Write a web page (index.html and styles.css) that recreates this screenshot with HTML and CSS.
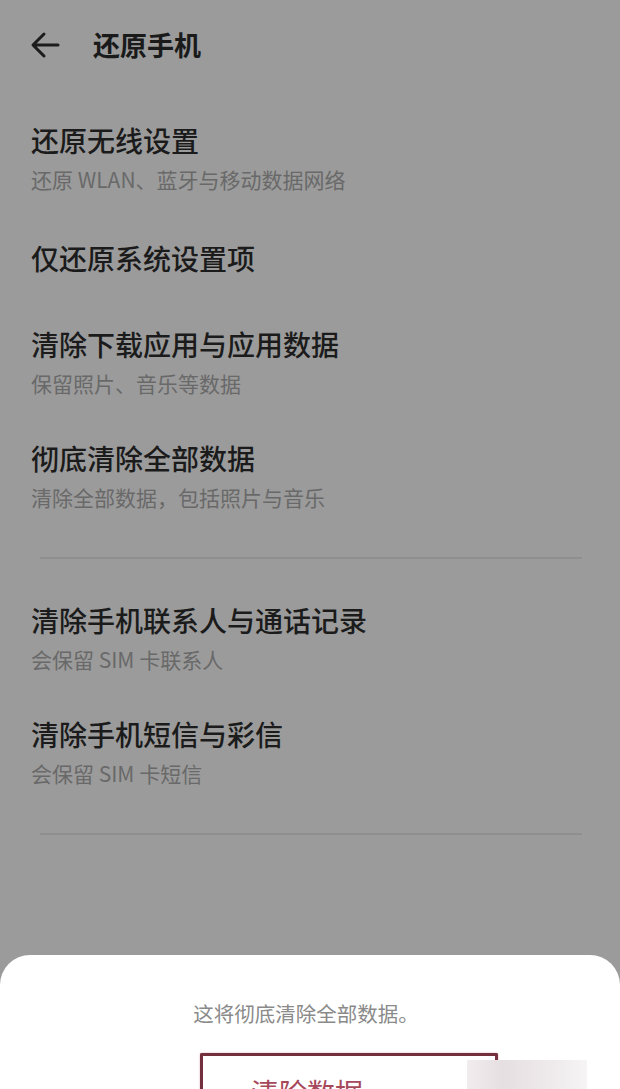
FILE: index.html
```html
<!DOCTYPE html>
<html lang="zh-CN">
<head>
<meta charset="utf-8">
<title>还原手机</title>
<link rel="stylesheet" href="styles.css">
</head>
<body>
<div class="screen">
  <header class="topbar">
    <svg class="back" width="30" height="28" viewBox="0 0 30 28" aria-hidden="true">
      <path d="M28 14 H4 M14 3 L3 14 L14 25" fill="none" stroke="#1c1c1c" stroke-width="3" stroke-linecap="round" stroke-linejoin="round"/>
    </svg>
    <h1 class="title">还原手机</h1>
  </header>

  <section class="group group-top">
    <div class="item">
      <div class="item-title">还原无线设置</div>
      <div class="item-sub">还原 WLAN、蓝牙与移动数据网络</div>
    </div>
    <div class="item">
      <div class="item-title">仅还原系统设置项</div>
    </div>
    <div class="item item-low">
      <div class="item-title">清除下载应用与应用数据</div>
      <div class="item-sub">保留照片、音乐等数据</div>
    </div>
    <div class="item">
      <div class="item-title">彻底清除全部数据</div>
      <div class="item-sub">清除全部数据，包括照片与音乐</div>
    </div>
  </section>

  <div class="divider divider-first"></div>

  <section class="group">
    <div class="item">
      <div class="item-title">清除手机联系人与通话记录</div>
      <div class="item-sub">会保留 SIM 卡联系人</div>
    </div>
    <div class="item item-high">
      <div class="item-title">清除手机短信与彩信</div>
      <div class="item-sub">会保留 SIM 卡短信</div>
    </div>
  </section>

  <div class="divider divider-second"></div>

  <section class="sheet">
    <p class="sheet-text">这将彻底清除全部数据。</p>
    <button class="danger-btn" type="button">清除数据</button>
    <div class="glare"></div>
  </section>
</div>
</body>
</html>
```

FILE: styles.css
```css
* { box-sizing: border-box; }

html, body {
  margin: 0;
  padding: 0;
}

body {
  width: 620px;
  height: 1089px;
  overflow: hidden;
  background: #9b9b9b;
  font-family: "Noto Sans CJK SC", "Noto Sans", "Liberation Sans", sans-serif;
}

.screen {
  display: flex;
  flex-direction: column;
  height: 1089px;
}

.screen > * {
  flex-shrink: 0;
}

.topbar {
  display: flex;
  align-items: center;
  height: 90px;
  padding-left: 30px;
  gap: 33px;
}

.back {
  display: block;
  flex: none;
}

.title {
  margin: 0;
  font-size: 27px;
  line-height: 36px;
  font-weight: 700;
  color: #1a1a1a;
}

.group {
  display: flex;
  flex-direction: column;
}

.group-top {
  padding-top: 10px;
}

.item {
  padding: 20px 0 20px 31px;
}

.item-low {
  padding-top: 26px;
  padding-bottom: 16px;
}

.item-high {
  padding-top: 16px;
  padding-bottom: 20px;
}

.item-title {
  font-size: 28px;
  line-height: 40px;
  font-weight: 500;
  color: #1b1b1b;
}

.item-sub {
  font-size: 21px;
  line-height: 38px;
  color: #696969;
}

.divider {
  height: 2px;
  margin: 0 38px 0 40px;
  background: #8f8f8f;
}

.divider-first {
  margin-top: 21px;
  margin-bottom: 21px;
}

.divider-second {
  margin-top: 21px;
}

.sheet {
  position: relative;
  margin-top: 120px;
  flex: 1 0 auto;
  background: #ffffff;
  border-radius: 30px 30px 0 0;
  padding-top: 44px;
}

.sheet-text {
  margin: 0;
  text-align: center;
  font-size: 20.5px;
  line-height: 28px;
  color: #8a8a8a;
  padding-right: 8px;
}

.danger-btn {
  display: block;
  margin: 26px 0 0 200px;
  width: 298px;
  height: 60px;
  padding: 14px 0 0 48px;
  text-align: left;
  vertical-align: top;
  background: #ffffff;
  border: 3px solid #74303f;
  border-bottom: none;
  border-radius: 2px 2px 0 0;
  box-shadow: 0 0 2px #d9a3ac;
  font-family: "Noto Sans CJK SC", "Noto Sans", sans-serif;
  font-size: 28px;
  line-height: 36px;
  color: #a5485a;
}

.glare {
  position: absolute;
  left: 467px;
  top: 105px;
  width: 120px;
  height: 40px;
  background: linear-gradient(90deg, #f1ecee 0%, #e6dfe2 30%, #ece7e9 60%, #f6f4f5 100%);
}
```
